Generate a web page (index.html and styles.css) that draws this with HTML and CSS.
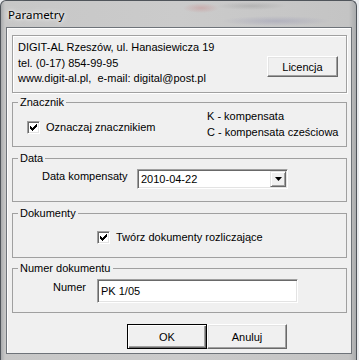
FILE: index.html
```html
<!DOCTYPE html>
<html lang="pl">
<head>
  <meta charset="UTF-8">
  <title>Parametry</title>
  <link rel="stylesheet" href="styles.css">
</head>
<body>
  <div class="window">
    <div class="titlebar"><span class="title">Parametry</span></div>
    <div class="client">
      <div class="group info">
        <div class="info-text">
          <div>DIGIT-AL Rzeszów, ul. Hanasiewicza 19</div>
          <div>tel. (0-17) 854-99-95</div>
          <div>www.digit-al.pl,&nbsp; e-mail: digital@post.pl</div>
        </div>
        <button class="btn btn-licencja">Licencja</button>
      </div>

      <fieldset class="group marker">
        <legend>Znacznik</legend>
        <div class="marker-body">
          <label class="check-row">
            <span class="checkbox"><svg width="7" height="7" viewBox="0 0 7 7"><path d="M0 2h1v3H0zM1 3h1v3H1zM2 4h1v3H2zM3 3h1v3H3zM4 2h1v3H4zM5 1h1v3H5zM6 0h1v3H6z" fill="#000"/></svg></span>
            <span>Oznaczaj znacznikiem</span>
          </label>
          <div class="legend-list">
            <div>K - kompensata</div>
            <div>C - kompensata cześciowa</div>
          </div>
        </div>
      </fieldset>

      <fieldset class="group date">
        <legend>Data</legend>
        <div class="date-body">
          <span class="field-label date-label">Data kompensaty</span>
          <div class="combo">
            <span class="combo-value">2010-04-22</span>
            <span class="combo-btn"><svg width="7" height="4" viewBox="0 0 7 4"><path d="M0 0h7L3.5 4z" fill="#000"/></svg></span>
          </div>
        </div>
      </fieldset>

      <fieldset class="group docs">
        <legend>Dokumenty</legend>
        <div class="docs-body">
          <label class="check-row">
            <span class="checkbox"><svg width="7" height="7" viewBox="0 0 7 7"><path d="M0 2h1v3H0zM1 3h1v3H1zM2 4h1v3H2zM3 3h1v3H3zM4 2h1v3H4zM5 1h1v3H5zM6 0h1v3H6z" fill="#000"/></svg></span>
            <span>Twórz dokumenty rozliczające</span>
          </label>
        </div>
      </fieldset>

      <fieldset class="group number">
        <legend>Numer dokumentu</legend>
        <div class="number-body">
          <span class="field-label number-label">Numer</span>
          <div class="textbox">PK 1/05</div>
        </div>
      </fieldset>

      <div class="actions">
        <button class="btn btn-default">OK</button>
        <button class="btn">Anuluj</button>
      </div>
    </div>
  </div>
</body>
</html>
```

FILE: styles.css
```css
body {
  margin: 0;
  background: #e9ebee;
  font-family: "Liberation Sans", Arial, sans-serif;
  font-size: 11px;
  color: #000;
}
.window {
  width: 346px;
  height: 359px;
  padding: 0 4px 0 5px;
  border: 1px solid #50555b;
  border-bottom: none;
  border-radius: 6px 6px 0 0;
  background:
    radial-gradient(ellipse 18px 5px at 200px 7px, rgba(200, 120, 120, 0.35), transparent),
    radial-gradient(ellipse 35px 4px at 250px 5px, rgba(120, 120, 120, 0.25), transparent),
    radial-gradient(ellipse 55px 5px at 275px 20px, rgba(130, 130, 170, 0.3), transparent),
    linear-gradient(90deg, #a9abad, #c7c7c7 4px, #cbcbcb 50%, #c4c4c4 98%, #a9abad);
}
.titlebar {
  height: 26px;
  display: flex;
  align-items: center;
  padding-left: 2px;
}
.title {
  font-family: "Noto Sans", "Open Sans", sans-serif;
  font-size: 11.5px;
  color: #000;
  text-shadow: 0 0 6px #fff, 0 0 3px #fff;
}
.client {
  box-sizing: border-box;
  width: 346px;
  padding: 7px 4px 4px 5px;
  border: 1px solid #6e7379;
  background: #f0f0f0;
  box-shadow: inset 1px 1px 0 #fff;
}

/* group boxes */
.group {
  margin: 0;
  padding: 0;
  border: 1px solid #a0a0a0;
  min-inline-size: 0;
}
.group legend {
  margin-left: 5px;
  padding: 0 2px;
  line-height: 13px;
}
.info {
  box-sizing: border-box;
  height: 58px;
  display: flex;
  justify-content: space-between;
  align-items: flex-start;
  padding: 4px 8px 0 5px;
  box-shadow: inset 1px 1px 0 #fff, 1px 1px 0 #fff;
}
.info-text {
  line-height: 15.6px;
}
.btn-licencja {
  width: 71px;
  height: 21px;
  margin-top: 16px;
}
.marker { margin-top: 3px; }
.date { margin-top: 5px; }
.docs { margin-top: 5px; }
.number { margin-top: 4px; }

.marker-body {
  height: 37px;
  display: grid;
  grid-template-columns: 194px 1fr;
}
.marker-body .check-row {
  margin-top: 10px;
  padding-left: 14px;
}
.legend-list {
  margin-top: -1px;
  line-height: 16px;
}
.check-row {
  display: flex;
  align-items: center;
  gap: 6px;
  height: 16px;
}
.checkbox {
  box-sizing: border-box;
  width: 13px;
  height: 13px;
  display: flex;
  align-items: center;
  justify-content: center;
  background: #fff;
  border: 1px solid;
  border-color: #a0a0a0 #fff #fff #a0a0a0;
  box-shadow: inset 1px 1px 0 #696969, inset -1px -1px 0 #e3e3e3;
}
.checkbox svg { display: block; }

.date-body {
  height: 36px;
  display: flex;
  align-items: flex-start;
  padding-left: 29px;
}
.field-label {
  line-height: 13px;
}
.date-label {
  width: 95px;
  margin-top: 5px;
}
.combo {
  box-sizing: border-box;
  width: 151px;
  height: 20px;
  margin-top: 4px;
  display: flex;
  align-items: center;
  justify-content: space-between;
  background: #fff;
  border: 1px solid;
  border-color: #a0a0a0 #fff #fff #a0a0a0;
  box-shadow: inset 1px 1px 0 #696969, inset -1px -1px 0 #e3e3e3;
  padding: 1px;
}
.combo-value {
  padding-left: 2px;
}
.combo-btn {
  box-sizing: border-box;
  width: 16px;
  height: 16px;
  display: flex;
  align-items: center;
  justify-content: center;
  background: #f0f0f0;
  border: 1px solid;
  border-color: #e3e3e3 #696969 #696969 #e3e3e3;
  box-shadow: inset 1px 1px 0 #fff, inset -1px -1px 0 #a0a0a0;
}
.combo-btn svg { display: block; }

.docs-body {
  height: 37px;
  padding-left: 84px;
}
.docs-body .check-row {
  padding-top: 9px;
}

.number-body {
  height: 37px;
  display: flex;
  align-items: flex-start;
  padding-left: 40px;
}
.number-label {
  width: 44px;
  margin-top: 6px;
}
.textbox {
  box-sizing: border-box;
  width: 201px;
  height: 24px;
  margin-top: 4px;
  padding: 0 3px;
  display: flex;
  align-items: center;
  background: #fff;
  border: 1px solid;
  border-color: #a0a0a0 #fff #fff #a0a0a0;
  box-shadow: inset 1px 1px 0 #696969, inset -1px -1px 0 #e3e3e3;
}

/* buttons */
.btn {
  box-sizing: border-box;
  padding: 0;
  font-family: "Liberation Sans", Arial, sans-serif;
  font-size: 11px;
  color: #000;
  background: #f0f0f0;
  border: 1px solid;
  border-color: #fff #696969 #696969 #fff;
  box-shadow: inset -1px -1px 0 #a0a0a0, inset 1px 1px 0 #e3e3e3;
}
.actions {
  display: flex;
  margin-top: 11px;
  margin-left: 115px;
}
.actions .btn {
  width: 80px;
  height: 25px;
}
.btn-default {
  border: 1px solid #000;
  box-shadow: inset 1px 1px 0 #fff, inset -1px -1px 0 #696969, inset -2px -2px 0 #a0a0a0;
}
```
